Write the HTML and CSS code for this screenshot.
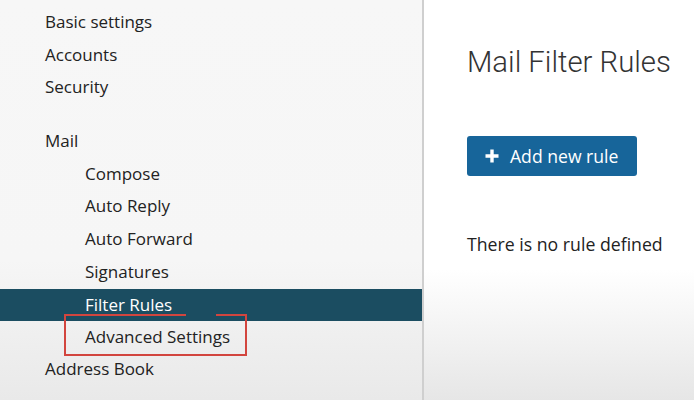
FILE: index.html
```html
<!DOCTYPE html>
<html>
<head>
<meta charset="utf-8">
<link rel="stylesheet" href="styles.css">
</head>
<body>
<div class="app">
  <nav class="sidebar">
    <div class="item">Basic settings</div>
    <div class="item">Accounts</div>
    <div class="item">Security</div>
    <div class="item group">Mail</div>
    <div class="item sub">Compose</div>
    <div class="item sub">Auto Reply</div>
    <div class="item sub">Auto Forward</div>
    <div class="item sub">Signatures</div>
    <div class="item sub active">Filter Rules</div>
    <div class="item sub marked"><span class="mark"></span><span class="mark-gap"></span>Advanced Settings</div>
    <div class="item">Address Book</div>
  </nav>
  <main class="content">
    <h1 class="title">Mail Filter Rules</h1>
    <button class="add-btn"><svg class="plus" width="14" height="14" viewBox="0 0 14 14"><path d="M7 0.5v13M0.5 7h13" stroke="#fff" stroke-width="3.4"/></svg>Add new rule</button>
    <p class="empty">There is no rule defined</p>
  </main>
</div>
</body>
</html>
```
FILE: styles.css
```css
* { box-sizing: border-box; }
html, body { margin: 0; padding: 0; }
body {
  width: 694px;
  height: 400px;
  overflow: hidden;
  font-family: "Open Sans", "Noto Sans", sans-serif;
  color: #222;
}
.app {
  display: flex;
  height: 400px;
}
.sidebar {
  width: 424px;
  flex: none;
  border-right: 2px solid #cfcfcf;
  background: linear-gradient(to bottom, #f7f7f7 0, #f6f6f6 260px, #e9e9e9 400px);
  padding-top: 6px;
  display: flex;
  flex-direction: column;
}
.item {
  height: 32.7px;
  line-height: 32.7px;
  font-size: 17px;
  padding-left: 45px;
  color: #222;
  position: relative;
}
.item.group { margin-top: 21px; }
.item.sub { padding-left: 85px; }
.item.active {
  background: #1b4d61;
  color: #fff;
  height: 32px;
  line-height: 32px;
}
.mark {
  position: absolute;
  left: 64px;
  top: -7px;
  width: 183px;
  height: 42px;
  border: 2.5px solid #d2453e;
}
.mark-gap {
  position: absolute;
  left: 186px;
  top: -7px;
  width: 30px;
  height: 3px;
  background: #1b4d61;
}
.content {
  flex: 1;
  padding-left: 43px;
  background: linear-gradient(to bottom, #ffffff 0, #ffffff 270px, #e6e6e6 400px);
  display: flex;
  flex-direction: column;
  align-items: flex-start;
}
.title {
  margin: 44px 0 0;
  font-family: Roboto, sans-serif;
  font-weight: 300;
  font-size: 29.3px;
  line-height: 36px;
  color: #333;
}
.add-btn {
  margin-top: 56px;
  width: 170px;
  height: 40px;
  border: none;
  border-radius: 3px;
  background: #17659a;
  color: #fff;
  font-family: "Open Sans", "Noto Sans", sans-serif;
  font-size: 17.6px;
  display: flex;
  align-items: center;
  padding: 0 0 0 18px;
  gap: 11px;
}
.empty {
  margin: 56px 0 0;
  font-size: 17.7px;
  line-height: 24px;
  color: #222;
}
```
